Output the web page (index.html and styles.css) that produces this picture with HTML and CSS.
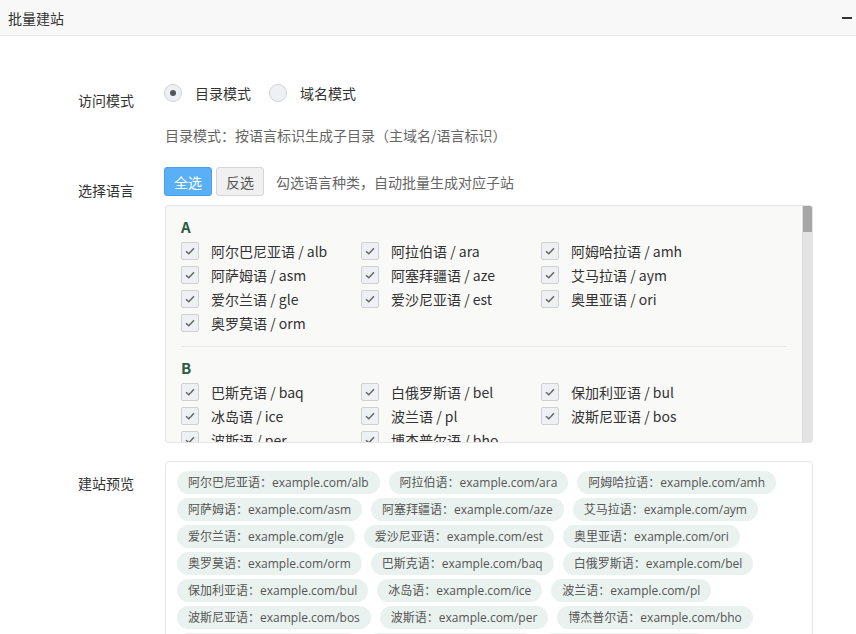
FILE: index.html
```html
<!DOCTYPE html>
<html lang="zh-CN">
<head>
    <meta charset="UTF-8">
    <title>批量建站</title>
    <link rel="stylesheet" href="styles.css">
</head>
<body>

    <div class="panel">
        <div class="panel-head">
            <span class="panel-title">批量建站</span>
            <span class="panel-fold"></span>
        </div>

        <div class="panel-body">
            <!-- 访问模式 -->
            <div class="form-row row-mode">
                <div class="form-label">访问模式</div>
                <div class="form-field">
                    <div class="radio-group">
                        <label class="radio checked"><span class="radio-dot"></span>目录模式</label>
                        <label class="radio"><span class="radio-dot"></span>域名模式</label>
                    </div>
                    <p class="hint mode-hint">目录模式：按语言标识生成子目录（主域名/语言标识）</p>
                </div>
            </div>

            <!-- 选择语言 -->
            <div class="form-row row-lang">
                <div class="form-label">选择语言</div>
                <div class="form-field">
                    <div class="toolbar">
                        <button class="btn btn-primary">全选</button>
                        <button class="btn">反选</button>
                        <span class="hint">勾选语言种类，自动批量生成对应子站</span>
                    </div>
                    <div class="lang-box">
                        <div class="lang-list" id="lang-list"></div>
                        <div class="scroll-bar"><div class="scroll-thumb"></div></div>
                    </div>
                </div>
            </div>

            <!-- 建站预览 -->
            <div class="form-row row-preview">
                <div class="form-label">建站预览</div>
                <div class="form-field">
                    <div class="preview-box" id="preview"></div>
                </div>
            </div>
        </div>
    </div>

    <script>
        const grupos = [
            ['A', [['阿尔巴尼亚语', 'alb'], ['阿拉伯语', 'ara'], ['阿姆哈拉语', 'amh'], ['阿萨姆语', 'asm'], ['阿塞拜疆语', 'aze'], ['艾马拉语', 'aym'], ['爱尔兰语', 'gle'], ['爱沙尼亚语', 'est'], ['奥里亚语', 'ori'], ['奥罗莫语', 'orm']]],
            ['B', [['巴斯克语', 'baq'], ['白俄罗斯语', 'bel'], ['保加利亚语', 'bul'], ['冰岛语', 'ice'], ['波兰语', 'pl'], ['波斯尼亚语', 'bos'], ['波斯语', 'per'], ['博杰普尔语', 'bho']]],
            ['C', [['楚瓦什语', 'chv'], ['聪加语', 'tso']]],
            ['D', [['鞑靼语', 'tat'], ['丹麦语', 'dan'], ['德语', 'de'], ['迪维希语', 'div'], ['多格拉语', 'doi']]],
            ['E', [['俄语', 'ru']]],
            ['F', [['法语', 'fra'], ['梵语', 'san'], ['菲律宾语', 'fil'], ['芬兰语', 'fin'], ['弗里西语', 'fry']]],
            ['G', [['高棉语', 'hkm'], ['格鲁吉亚语', 'geo'], ['古吉拉特语', 'guj']]],
            ['H', [['哈萨克语', 'kaz'], ['海地克里奥尔语', 'ht'], ['韩语', 'kor'], ['豪萨语', 'hau'], ['荷兰语', 'nl']]]
        ];

        const lista = document.getElementById('lang-list');
        const preview = document.getElementById('preview');

        grupos.forEach(([letra, idiomas]) => {
            let html = `<div class="lang-group"><h4>${letra}</h4><div class="lang-grid">`;
            idiomas.forEach(([nombre, codigo]) => {
                html += `<label class="check"><span class="check-box"><svg viewBox="0 0 10 8" width="10" height="8"><path d="M1 4.2 L3.8 6.8 L9 1.2" fill="none" stroke="#666" stroke-width="1.5"/></svg></span>${nombre} / ${codigo}</label>`;
                preview.innerHTML += `<span class="tag">${nombre}：example.com/${codigo}</span>`;
            });
            html += '</div></div>';
            lista.innerHTML += html;
        });
    </script>

</body>
</html>
```

FILE: styles.css
```css
body {
    margin: 0;
    padding: 0;
    background-color: #fff;
    color: #333;
    font-family: "Noto Sans CJK SC", sans-serif;
    font-size: 14px;
}

.panel-head {
    height: 35px;
    background-color: #f8f8f8;
    border-bottom: 1px solid #e8e8e8;
    display: flex;
    align-items: center;
    justify-content: space-between;
    padding: 0 4px 0 8px;
}

.panel-title {
    font-size: 14px;
    color: #333;
}

.panel-fold {
    width: 10px;
    height: 2px;
    background-color: #333;
}

.panel-body {
    padding-top: 48px;
}

.form-row {
    display: flex;
}

.form-label {
    width: 86px;
    padding-left: 78px;
    padding-top: 6px;
    line-height: 20px;
    color: #333;
}

.form-field {
    width: 649px;
}

/* 访问模式 */
.radio-group {
    display: flex;
    gap: 18px;
    height: 20px;
    margin-top: -1px;
}

.radio {
    display: flex;
    align-items: center;
    gap: 13px;
    line-height: 20px;
}

.radio-dot {
    width: 16px;
    height: 16px;
    border: 1px solid #d2d2d2;
    border-radius: 50%;
    background-color: #eef0f3;
    display: flex;
    align-items: center;
    justify-content: center;
}

.radio.checked .radio-dot::after {
    content: "";
    width: 6px;
    height: 6px;
    border-radius: 50%;
    background-color: #555;
}

.hint {
    color: #666;
    margin: 0;
    line-height: 20px;
}

.mode-hint {
    margin-top: 22px;
    padding-left: 1px;
}

.row-lang {
    margin-top: 22px;
}

.row-lang .form-label {
    padding-top: 13px;
}

/* 选择语言 */
.toolbar {
    display: flex;
    align-items: center;
    height: 29px;
}

.btn {
    height: 29px;
    width: 48px;
    padding: 0;
    border: 1px solid #d6d6d6;
    border-radius: 3px;
    background-color: #f0f0f0;
    color: #555;
    font-family: inherit;
    font-size: 14px;
    margin-right: 4px;
}

.btn-primary {
    background-color: #5ab0f7;
    border-color: #4a9fe6;
    color: #fff;
}

.toolbar .hint {
    margin-left: 8px;
}

.lang-box {
    margin-top: 9px;
    margin-left: 1px;
    height: 236px;
    display: flex;
    background-color: #f9f9f7;
    border: 1px solid #e6e6e6;
    border-radius: 3px;
    overflow: hidden;
}

.lang-list {
    flex: 1;
    padding: 0 15px;
    overflow: hidden;
}

.scroll-bar {
    width: 9px;
    background-color: #e4e4e4;
    border-left: 1px solid #dcdcdc;
}

.scroll-thumb {
    height: 26px;
    background-color: #a6a6a6;
}

.lang-group {
    padding: 11px 0 11px;
    border-bottom: 1px solid #e8e8e8;
}

.lang-group h4 {
    margin: 0 0 2px;
    font-size: 15px;
    line-height: 20px;
    font-weight: bold;
    color: #2d5a44;
}

.lang-grid {
    display: grid;
    grid-template-columns: repeat(3, 180px);
}

.check {
    display: flex;
    align-items: center;
    gap: 12px;
    height: 24px;
    color: #333;
    white-space: nowrap;
}

.check-box {
    width: 16px;
    height: 16px;
    border: 1px solid #d0d0d0;
    border-radius: 2px;
    background-color: #eef0f3;
    display: flex;
    align-items: center;
    justify-content: center;
}

/* 建站预览 */
.row-preview {
    margin-top: 18px;
}

.row-preview .form-label {
    padding-top: 12px;
}

.preview-box {
    margin-left: 1px;
    background-color: #fff;
    border: 1px solid #e6e6e6;
    border-radius: 4px;
    padding: 9px 11px;
    display: flex;
    flex-wrap: wrap;
    gap: 4px 9px;
}

.tag {
    height: 23px;
    line-height: 23px;
    padding: 0 11px;
    border-radius: 12px;
    background-color: #e9f2ee;
    color: #555;
    font-family: "Open Sans", "Noto Sans CJK SC", sans-serif;
    font-size: 12px;
    white-space: nowrap;
}
```
